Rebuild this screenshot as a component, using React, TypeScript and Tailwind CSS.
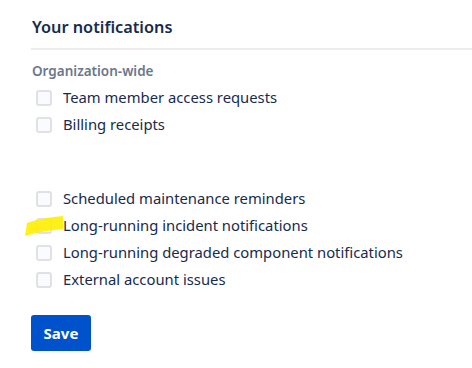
import React from "react";

const Row = ({ label }: { label: string }) => (
  <label className="flex h-[27px] items-center">
    <span className="ml-[5px] mr-[11px] box-border h-[16px] w-[16px] rounded-[3px] border-2 border-[#dfe1e6] bg-[#fafbfc]" />
    <span className="text-[14.8px] text-[#172b4d]">{label}</span>
  </label>
);

export default function App() {
  return (
    <div
      className="relative h-[368px] w-[472px] overflow-hidden bg-white pl-[31px]"
      style={{ fontFamily: '"Noto Sans", "Open Sans", sans-serif' }}
    >
      <h2 className="pt-[15px] pl-[1px] text-[16.3px] font-semibold leading-[24px] text-[#172b4d]">
        Your notifications
      </h2>
      <div className="mt-[9px] h-[2px] bg-[#ebecf0]" />
      <div className="mt-[11px] pl-[1px] text-[13.5px] font-semibold leading-[20px] text-[#6b778c]">
        Organization-wide
      </div>
      <div className="mt-[3px] flex flex-col">
        <Row label="Team member access requests" />
        <Row label="Billing receipts" />
      </div>
      <div className="h-[47px]" />
      <div className="flex flex-col">
        <Row label="Scheduled maintenance reminders" />
        <Row label="Long-running incident notifications" />
        <Row label="Long-running degraded component notifications" />
        <Row label="External account issues" />
      </div>
      <button className="mt-[22px] h-[36px] w-[60px] rounded-[3px] bg-[#0052cc] text-[15px] font-bold text-white">
        Save
      </button>
      <svg
        className="pointer-events-none absolute left-0 top-0"
        width="472"
        height="368"
      >
        <path
          d="M27 223 C 38 219, 50 217, 63 216 L 63 229 C 50 230, 38 232, 25 236 Z"
          fill="#ffee00"
          opacity="0.9"
        />
      </svg>
    </div>
  );
}
